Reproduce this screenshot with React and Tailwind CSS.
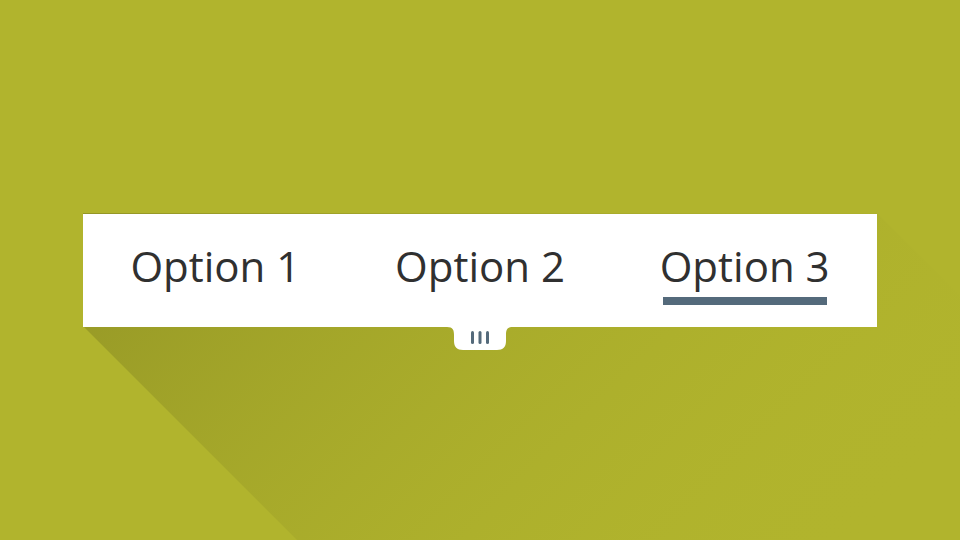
import React from "react"

const tabs = ["Option 1", "Option 2", "Option 3"]

function LongShadow() {
  return (
    <svg className="absolute inset-0 pointer-events-none" width="960" height="540" viewBox="0 0 960 540">
      <defs>
        <linearGradient id="ls" x1="83" y1="213" x2="640" y2="770" gradientUnits="userSpaceOnUse">
          <stop offset="0" stopColor="#8e9024" stopOpacity="0.85" />
          <stop offset="1" stopColor="#b1b42d" stopOpacity="0" />
        </linearGradient>
      </defs>
      <polygon points="83,213 877,213 1500,836 706,949 83,326" fill="url(#ls)" />
    </svg>
  )
}

function Handle() {
  return (
    <div className="absolute left-1/2 top-full -translate-x-1/2">
      <svg width="66" height="24" viewBox="0 0 66 24">
        <path d="M0 0 H66 C60 0 59 3 59 8 V14 C59 20 56 23 50 23 H16 C10 23 7 20 7 14 V8 C7 3 6 0 0 0 Z" fill="#ffffff" />
        <rect x="24" y="4" width="3" height="13" rx="1.5" fill="#546a7b" />
        <rect x="31.5" y="4" width="3" height="13" rx="1.5" fill="#546a7b" />
        <rect x="39" y="4" width="3" height="13" rx="1.5" fill="#546a7b" />
      </svg>
    </div>
  )
}

export default function App() {
  return (
    <div className="relative w-[960px] h-[540px] overflow-hidden bg-[#b1b42d] flex items-center justify-center">
      <LongShadow />
      <div className="relative w-[794px] h-[113px] bg-white grid grid-cols-3" style={{ fontFamily: '"Open Sans", "Noto Sans", sans-serif' }}>
        {tabs.map((t, i) => (
          <div key={t} className="flex items-center justify-center">
            <div className="relative text-[42px] leading-none text-[#303030] pb-[9px]">
              {t}
              {i === 2 && <div className="absolute left-[3px] right-[3px] -bottom-[9px] h-[8px] bg-[#546a7b]" />}
            </div>
          </div>
        ))}
        <Handle />
      </div>
    </div>
  )
}
